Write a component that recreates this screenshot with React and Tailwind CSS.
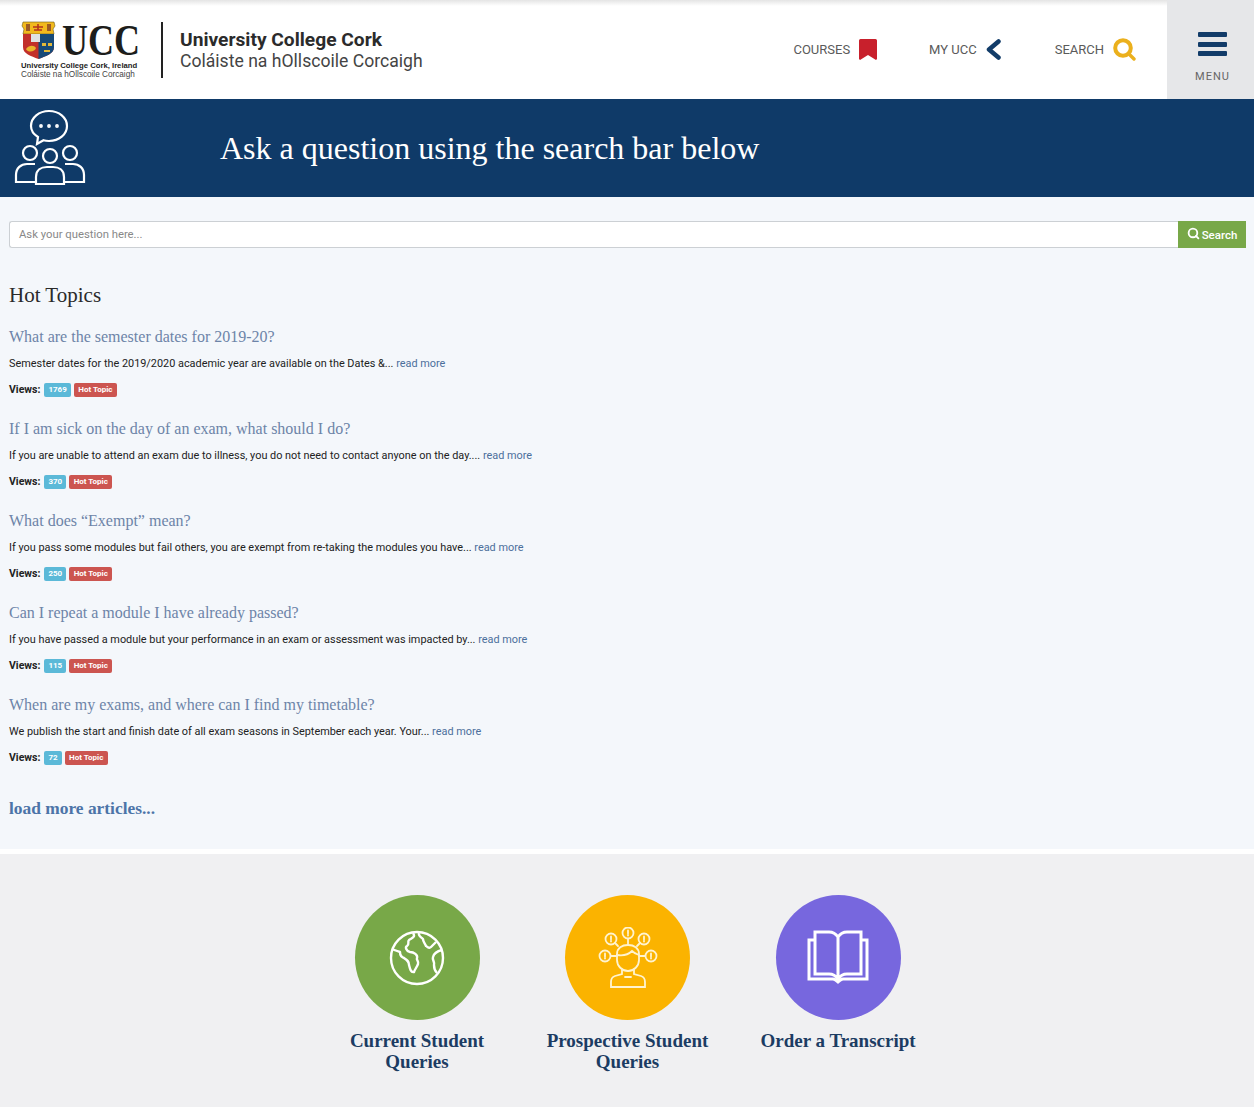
import { Search } from 'lucide-react'

const serif = "font-['Liberation_Serif',serif]"

const topics = [
  {
    title: 'What are the semester dates for 2019-20?',
    text: 'Semester dates for the 2019/2020 academic year are available on the Dates &...',
    views: 1769,
  },
  {
    title: 'If I am sick on the day of an exam, what should I do?',
    text: 'If you are unable to attend an exam due to illness, you do not need to contact anyone on the day....',
    views: 370,
  },
  {
    title: 'What does “Exempt” mean?',
    text: 'If you pass some modules but fail others, you are exempt from re-taking the modules you have...',
    views: 250,
  },
  {
    title: 'Can I repeat a module I have already passed?',
    text: 'If you have passed a module but your performance in an exam or assessment was impacted by...',
    views: 115,
  },
  {
    title: 'When are my exams, and where can I find my timetable?',
    text: 'We publish the start and finish date of all exam seasons in September each year. Your...',
    views: 72,
  },
]

function Crest() {
  return (
    <svg width="35" height="38" viewBox="0 0 35 38" className="shrink-0">
      <path d="M2 1h31l1 4-2 3 1 5H2l1-5-2-3z" fill="#f2b91d" stroke="#6b5a1a" strokeWidth="0.6" />
      <path d="M5 3h4v7H5zM26 3h4v7h-4z" fill="#9c5a26" />
      <path d="M12 6h10M17 3v6M13 9h8" stroke="#b3321f" strokeWidth="1.600" />
      <path d="M2 13h31v13c0 7-8 9-15.500 12C10 35 2 33 2 26z" fill="#c2302a" />
      <path d="M17.500 19H33v7c0 7-8 9-15.500 12z" fill="#174a78" />
      <path d="M19 13h14v6H19z" fill="#174a78" />
      <path d="M10 13h9v8h-9z" fill="#dfe3e4" />
      <path d="M5 28c3-4 8-4 10-1-1 4-8 5-10 1z" fill="#e9b52c" />
      <path d="M21 22h4v3h-4zM27 22h4v3h-4zM23 29h6v2h-6z" fill="#e3b93a" />
    </svg>
  )
}

function PeopleIcon() {
  return (
    <svg width="72" height="78" viewBox="0 0 72 78" fill="none" stroke="white" strokeWidth="2.2" className="shrink-0">
      <path d="M35 2c10 0 18 6.500 18 15s-8 15-18 15c-2 0-4-.2-5.500-.7L23 35l1-7c-4.500-2.800-7-6.500-7-11C17 8.500 25 2 35 2z" />
      <circle cx="27" cy="17" r="0.8" fill="white" />
      <circle cx="35" cy="17" r="0.8" fill="white" />
      <circle cx="43" cy="17" r="0.8" fill="white" />
      <circle cx="16" cy="44" r="7" />
      <circle cx="36" cy="47" r="7" />
      <circle cx="56" cy="44" r="7" />
      <path d="M22 73H2v-7c0-7 5-11 11-11h8" />
      <path d="M50 73h20v-7c0-7-5-11-11-11h-8" />
      <path d="M22 75v-7c0-7 5-10 11-10h6c6 0 11 3 11 10v7z" />
    </svg>
  )
}

function GlobeIcon() {
  return (
    <svg width="56" height="56" viewBox="0 0 56 56" fill="none" stroke="white" strokeWidth="2.400" strokeLinejoin="round">
      <circle cx="28" cy="28" r="26" />
      <path d="M24 3c3 4-1 5-4 7-2 2 1 4-2 6-2 1-1 5 3 6 4 0 8 3 7 6-1 2 2 3 1 6-1 3-3 5-4 8-3 1-4-3-5-7 0-4-2-5-5-7-3-1-4-4-4-6-3-1-6-2-8-3" />
      <path d="M30 3c-1 3 2 4 4 6 0 3 2 4 3 7 2 1 3 3 5 1l5-5" />
      <path d="M53 20c-4 1-8 3-9 7-1 3 2 5 1 8 0 3 1 6 3 8" />
    </svg>
  )
}

function StudentIcon() {
  const bubble = (cx, cy) => (
    <g key={`${cx}-${cy}`}>
      <circle cx={cx} cy={cy} r="5.500" />
      <path d={`M${cx} ${cy - 2.500}v3M${cx} ${cy + 2}v.5`} />
    </g>
  )
  return (
    <svg width="60" height="62" viewBox="0 0 60 62" fill="none" stroke="#fff3cf" strokeWidth="1.800" strokeLinecap="round">
      {bubble(30, 6)}
      {bubble(13, 12)}
      {bubble(46, 12)}
      {bubble(7, 29)}
      {bubble(53, 29)}
      <path d="M13 29h6M47 29h-6M30 12v5M17 16l3 3M42 16l-3 3" />
      <path d="M19 27c0-6 5-9 11-9s11 3 11 9v6c0 6-5 11-11 11s-11-5-11-11z" />
      <path d="M19 28c6 1 12-1 15-4 2 2 4 3 7 4" />
      <path d="M24 43v4l-7 2c-3 1-4 3-4 6v5h34v-5c0-3-1-5-4-6l-7-2v-4" />
      <path d="M27 50h6" />
    </svg>
  )
}

function BookIcon() {
  return (
    <svg width="62" height="56" viewBox="0 0 62 56" fill="none" stroke="white" strokeWidth="3">
      <path d="M8 10H2v39h24c2 0 4 2 5 3 1-1 3-3 5-3h24V10h-6" />
      <path d="M31 49V7c-2-3-5-5-9-5H8v42h14c4 0 7 2 9 5 2-3 5-5 9-5h14V2H40c-4 0-7 2-9 5" />
    </svg>
  )
}

function Tile({ color, icon, label }) {
  return (
    <div className="flex w-[210.500px] flex-col items-center">
      <div className={`flex h-[125px] w-[125px] items-center justify-center rounded-full ${color}`}>{icon}</div>
      <div className={`${serif} mt-[10px] w-[180px] text-center text-[19px] leading-[21px] font-bold text-[#1c3c63]`}>
        {label}
      </div>
    </div>
  )
}

export default function App() {
  return (
    <div className="min-h-[1113px] bg-white font-['Roboto',sans-serif]">
      <header className="flex h-[99px] bg-gradient-to-b from-[#e4e4e4] to-white to-[6%]">
        <div className="flex flex-1 items-center pl-[21px]">
          <div className="w-[119px]">
            <div className="flex items-center gap-[6px]">
              <Crest />
              <span className={`${serif} origin-left scale-x-[0.8] text-[45px] leading-[38px] font-bold text-[#1d1d1b]`}>
                UCC
              </span>
            </div>
            <div className="mt-[2px] font-['Liberation_Sans',sans-serif] text-[7.700px] leading-[9px] font-bold whitespace-nowrap text-[#222]">
              University College Cork, Ireland
            </div>
            <div className="font-['Liberation_Sans',sans-serif] text-[8.200px] leading-[9px] whitespace-nowrap text-[#444]">
              Coláiste na hOllscoile Corcaigh
            </div>
          </div>
          <div className="mr-[17px] ml-[21px] h-[56px] w-[2px] bg-[#222]" />
          <div className="pt-[1px] leading-[21px]">
            <div className="text-[19.200px] font-bold text-[#2b2b2b]">University College Cork</div>
            <div className="mt-[1px] text-[17.600px] text-[#444]">Coláiste na hOllscoile Corcaigh</div>
          </div>
          <div className="ml-auto flex items-center text-[13px] text-[#5a5a5a]">
            <div className="flex items-center gap-[9px]">
              COURSES
              <svg width="18" height="21" viewBox="0 0 18 21">
                <path d="M0 1.500q0-1.500 1.500-1.500h15q1.500 0 1.500 1.500V20l-1 1-8-5-8 5-1-1z" fill="#c8202c" />
              </svg>
            </div>
            <div className="ml-[52px] flex items-center gap-[9px]">
              MY UCC
              <svg width="15" height="21" viewBox="0 0 15 21" fill="none" stroke="#123c69" strokeWidth="4.500" strokeLinecap="round" strokeLinejoin="round">
                <path d="M12.500 2.500 3 10.500l9.500 8" />
              </svg>
            </div>
            <div className="mr-[31px] ml-[54px] flex items-center gap-[9px]">
              SEARCH
              <svg width="23" height="23" viewBox="0 0 23 23" fill="none" stroke="#ebb01d" strokeLinecap="round">
                <circle cx="10" cy="10" r="7.800" strokeWidth="4" />
                <path d="M16 16l5 5" strokeWidth="3.400" />
              </svg>
            </div>
          </div>
        </div>
        <div className="flex w-[87px] flex-col items-center bg-[#e6e7e9] pt-[32px] pl-[4px]">
          <div className="flex w-[29px] flex-col gap-[4.500px]">
            <span className="h-[5px] rounded-[1px] bg-[#123c69]" />
            <span className="h-[5px] rounded-[1px] bg-[#123c69]" />
            <span className="h-[5px] rounded-[1px] bg-[#123c69]" />
          </div>
          <span className="mt-[14px] text-[11px] leading-[13px] tracking-[1px] text-[#666]">MENU</span>
        </div>
      </header>

      <section className="flex h-[98px] items-center bg-[#0f3a68] pl-[14px]">
        <PeopleIcon />
        <h1 className={`${serif} ml-[134px] text-[32px] font-normal text-white`}>
          Ask a question using the search bar below
        </h1>
      </section>

      <main className="h-[652px] bg-[#f4f7fb] px-[9px] pt-[24px]">
        <div className="mr-[-1px] flex h-[27px]">
          <div className="flex-1 rounded-l-[3px] border border-r-0 border-[#ccd0d4] bg-white px-[9px] text-[11.300px] leading-[25px] text-[#888]">
            Ask your question here...
          </div>
          <div className="flex w-[68px] items-center justify-center gap-[2px] bg-[#78a848] text-[11.500px] font-medium text-white">
            <Search size={13} strokeWidth={3.400} className="-mt-[2px]" />
            <span className="mt-[2px]">Search</span>
          </div>
        </div>

        <h2 className={`${serif} mt-[34px] text-[21px] leading-[26px] font-normal text-[#2a2a2a]`}>Hot Topics</h2>

        <div className="mt-[17px] flex flex-col gap-[20px]">
          {topics.map((topic) => (
            <article key={topic.title} className="h-[72px]">
              <h3 className={`${serif} text-[16px] leading-[24px] font-normal text-[#6d84a8]`}>{topic.title}</h3>
              <p className="mt-[8px] text-[10.880px] leading-[14px] text-[#222]">
                {topic.text} <a className="text-[#4c6f9c]">read more</a>
              </p>
              <div className="mt-[11px] flex items-center text-[10.500px] leading-[14px] font-bold text-[#222]">
                Views:
                <span className="mt-[1px] ml-[4px] rounded-[2px] bg-[#5bb9d8] px-[4px] text-[8px] leading-[14px] text-white">
                  {topic.views}
                </span>
                <span className="mt-[1px] ml-[3px] rounded-[2px] bg-[#cc5550] px-[4.500px] text-[8px] leading-[14px] text-white">
                  Hot Topic
                </span>
              </div>
            </article>
          ))}
        </div>

        <a className={`${serif} mt-[31px] block text-[17.400px] leading-[24px] font-bold text-[#4c74a8]`}>
          load more articles...
        </a>
      </main>

      <div className="h-[5px] bg-white" />

      <section className="flex h-[253px] justify-center bg-[#f0f0f2] pt-[41px]">
        <div className="mr-[-1px] flex">
          <Tile color="bg-[#78a848]" icon={<GlobeIcon />} label="Current Student Queries" />
          <Tile color="bg-[#fbb300]" icon={<StudentIcon />} label="Prospective Student Queries" />
          <Tile color="bg-[#7767de]" icon={<BookIcon />} label="Order a Transcript" />
        </div>
      </section>
    </div>
  )
}
